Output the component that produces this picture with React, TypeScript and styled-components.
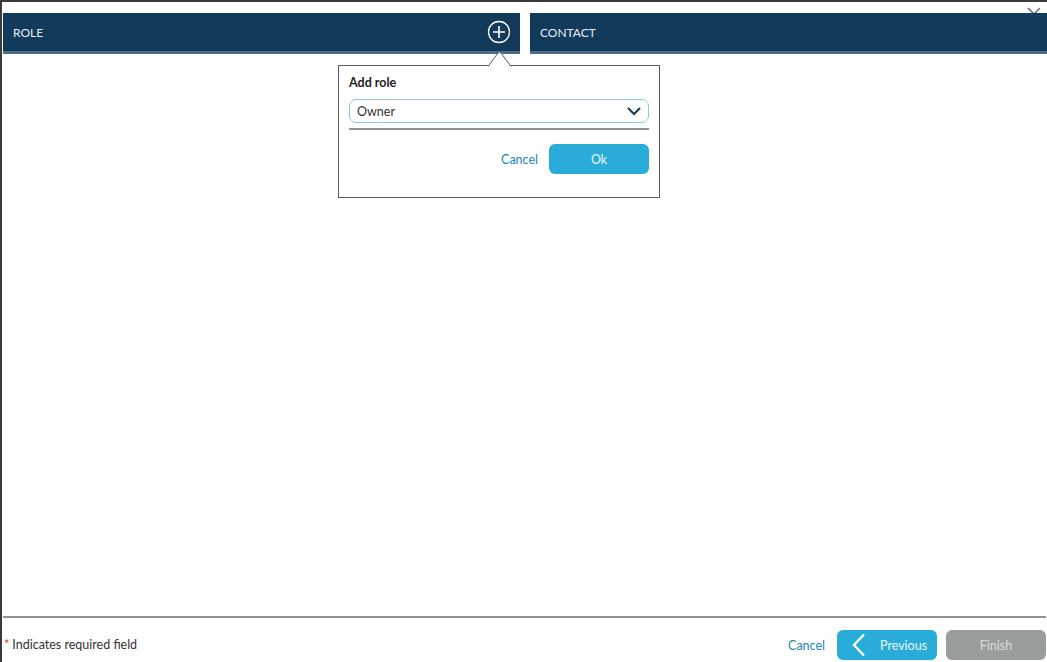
import styled, { createGlobalStyle } from 'styled-components'

const GlobalStyle = createGlobalStyle`
  html, body {
    margin: 0;
    padding: 0;
    background: #ffffff;
    font-family: Lato, "Noto Sans", sans-serif;
    font-size: 12px;
    color: #333333;
  }
  * { box-sizing: border-box; }
`

const Frame = styled.div`
  position: relative;
  height: 100vh;
  border-top: 2px solid #3a3a3a;
  border-left: 2px solid #3a3a3a;
  padding-left: 1px;
  display: flex;
  flex-direction: column;
  overflow: hidden;
`

const CloseButton = styled.button`
  position: absolute;
  top: 4px;
  right: 5px;
  width: 16px;
  height: 16px;
  padding: 0;
  border: none;
  background: none;
  z-index: 0;
`

const HeaderRow = styled.div`
  display: flex;
  gap: 10px;
  margin-top: 11px;
`

const HeaderBar = styled.div`
  position: relative;
  z-index: 1;
  flex: 1;
  height: 41px;
  background: #123a5b;
  border-bottom: 3px solid #4d6d88;
  color: #e8eef4;
  font-size: 12px;
  display: flex;
  align-items: center;
  padding: 0 10px;
`

const HeaderTitle = styled.span`
  flex: 1;
`

const AddButton = styled.button`
  width: 24px;
  height: 24px;
  padding: 0;
  margin-right: -1px;
  border: none;
  background: none;
  display: flex;
  align-items: center;
  justify-content: center;
`

const Popover = styled.div`
  position: absolute;
  top: 52px;
  left: 335px;
  width: 322px;
  height: 133px;
  background: #ffffff;
  border: 1px solid #5a5a5a;
  padding: 9px 10px 0 10px;
  z-index: 2;
`

const Caret = styled.svg`
  position: absolute;
  top: -14px;
  left: 149px;
`

const PopoverTitle = styled.div`
  font-weight: 700;
  font-size: 12.5px;
  color: #222222;
  margin-bottom: 9px;
`

const SelectBox = styled.div`
  height: 24px;
  border: 1px solid #8ec9dd;
  border-radius: 7px;
  display: flex;
  align-items: center;
  padding: 0 6px 0 7px;
  font-size: 12.5px;
  color: #333333;
`

const SelectValue = styled.span`
  flex: 1;
`

const Underline = styled.div`
  height: 2px;
  background: #8e9396;
  margin-top: 5px;
`

const ActionRow = styled.div`
  display: flex;
  justify-content: flex-end;
  align-items: center;
  gap: 11px;
  margin-top: 14px;
`

const LinkButton = styled.button`
  border: none;
  background: none;
  padding: 0;
  font-family: inherit;
  font-size: 12.5px;
  color: #2187b5;
`

const Button = styled.button<{ $variant: 'primary' | 'disabled' }>`
  width: 100px;
  height: 30px;
  border: none;
  border-radius: 6px;
  font-family: inherit;
  font-size: 12.5px;
  display: flex;
  align-items: center;
  justify-content: center;
  gap: 10px;
  background: ${p => (p.$variant === 'primary' ? '#29acd8' : '#9a9d9e')};
  color: ${p => (p.$variant === 'primary' ? '#eaf7fc' : '#dcdedf')};
`

const Content = styled.div`
  flex: 1;
`

const Separator = styled.div`
  height: 2px;
  background: #8e9396;
  margin-right: 1px;
`

const Footer = styled.div`
  height: 44px;
  display: flex;
  align-items: flex-start;
  padding: 12px 0 0 1px;
`

const RequiredNote = styled.span`
  flex: 1;
  line-height: 30px;
  font-size: 12.5px;
  color: #333333;
`

const Star = styled.span`
  color: #d9342b;
  margin-right: 3px;
`

const FooterActions = styled.div`
  display: flex;
  align-items: center;
  gap: 9px;
  margin-right: 1px;
`

const FooterCancel = styled(LinkButton)`
  margin-right: 3px;
`

const PreviousButton = styled(Button)`
  justify-content: flex-start;
  padding-left: 15px;
  gap: 14px;
`

export default function App() {
  return (
    <>
      <GlobalStyle />
      <Frame>
        <CloseButton aria-label="Close">
          <svg width="16" height="16" viewBox="0 0 16 16">
            <path d="M2 2 L14 14 M14 2 L2 14" stroke="#5a6b7a" strokeWidth="1.5" fill="none" />
          </svg>
        </CloseButton>
        <HeaderRow>
          <HeaderBar>
            <HeaderTitle>ROLE</HeaderTitle>
            <AddButton aria-label="Add role">
              <svg width="24" height="24" viewBox="0 0 24 24">
                <circle cx="12" cy="12" r="10.5" stroke="#ffffff" strokeWidth="1.3" fill="none" />
                <path d="M12 6 V18 M6 12 H18" stroke="#ffffff" strokeWidth="1.6" />
              </svg>
            </AddButton>
            <Popover>
              <Caret width="24" height="15" viewBox="0 0 24 15">
                <path d="M0 14.5 L10 1 L11.5 0 L13 1 L23 14.5" stroke="#5a5a5a" strokeWidth="1" fill="#ffffff" />
              </Caret>
              <PopoverTitle>Add role</PopoverTitle>
              <SelectBox>
                <SelectValue>Owner</SelectValue>
                <svg width="16" height="10" viewBox="0 0 16 10">
                  <path d="M2 2 L8 8 L14 2" stroke="#1b3a57" strokeWidth="2" fill="none" />
                </svg>
              </SelectBox>
              <Underline />
              <ActionRow>
                <LinkButton>Cancel</LinkButton>
                <Button $variant="primary">Ok</Button>
              </ActionRow>
            </Popover>
          </HeaderBar>
          <HeaderBar>
            <HeaderTitle>CONTACT</HeaderTitle>
          </HeaderBar>
        </HeaderRow>
        <Content />
        <Separator />
        <Footer>
          <RequiredNote>
            <Star>*</Star>Indicates required field
          </RequiredNote>
          <FooterActions>
            <FooterCancel>Cancel</FooterCancel>
            <PreviousButton $variant="primary">
              <svg width="14" height="24" viewBox="0 0 14 24">
                <path d="M12 1.5 L2 12 L12 22.5" stroke="#ffffff" strokeWidth="2.4" fill="none" />
              </svg>
              Previous
            </PreviousButton>
            <Button $variant="disabled">Finish</Button>
          </FooterActions>
        </Footer>
      </Frame>
    </>
  )
}
